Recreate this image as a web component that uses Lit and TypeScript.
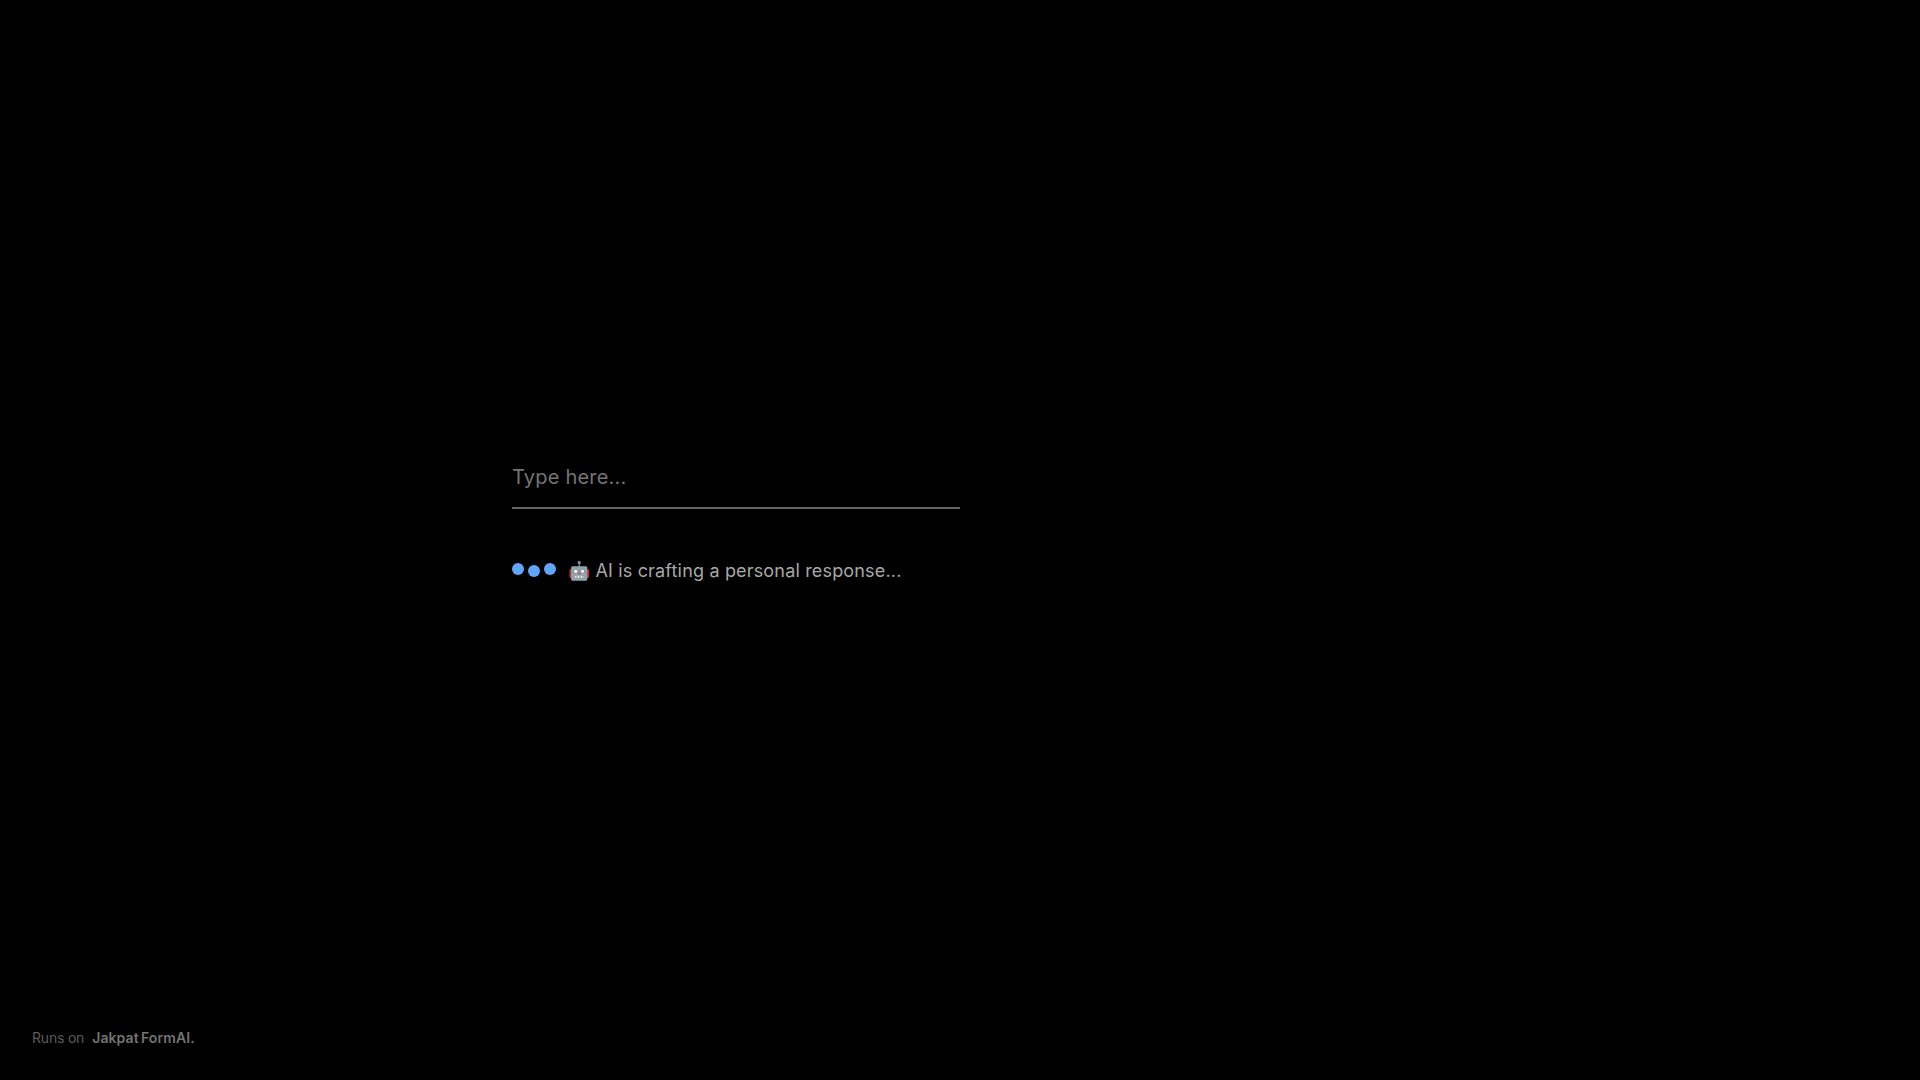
import { LitElement, html, css } from "lit";
import { customElement } from "lit/decorators.js";

@customElement("app-root")
export class AppRoot extends LitElement {
  static styles = css`
    :host {
      display: flex;
      flex-direction: column;
      height: 1080px;
      background: #000;
      font-family: Inter, "Liberation Sans", sans-serif;
      overflow: hidden;
    }
    .main {
      flex: 1;
      display: flex;
      flex-direction: column;
      align-items: flex-start;
      padding: 455px 0 0 512px;
    }
    .field {
      width: 448px;
      height: 54px;
      box-sizing: border-box;
      padding: 0 0 8px;
      display: block;
      background: transparent;
      border: none;
      border-bottom: 2px solid #666;
      outline: none;
      color: #fff;
      font: 400 20px Inter, sans-serif;
      letter-spacing: 0.2px;
    }
    .field::placeholder {
      color: #757575;
      opacity: 1;
    }
    .status {
      margin-top: 46px;
      display: flex;
      align-items: center;
      gap: 12px;
      height: 32px;
    }
    .dots {
      display: flex;
      gap: 4px;
      align-items: center;
    }
    .dot {
      width: 12px;
      height: 12px;
      border-radius: 50%;
      background: #60a5fa;
    }
    .dot.up {
      transform: translateY(-2px);
    }
    .text {
      font-size: 18px;
      line-height: 28px;
      letter-spacing: 0.17px;
      color: #a8a8a8;
      white-space: nowrap;
    }
    .footer {
      padding: 0 0 32px 32px;
      font-size: 14px;
      line-height: 20px;
      color: #5c5c5c;
      display: flex;
      gap: 8px;
    }
    .footer span {
      letter-spacing: -0.2px;
    }
    .footer b {
      font-weight: 600;
      color: #737373;
      letter-spacing: 0.11px;
      word-spacing: -1.5px;
    }
  `;

  render() {
    return html`
      <div class="main">
        <input class="field" placeholder="Type here..." />
        <div class="status">
          <div class="dots">
            <span class="dot up"></span>
            <span class="dot"></span>
            <span class="dot up"></span>
          </div>
          <span class="text">🤖 AI is crafting a personal response...</span>
        </div>
      </div>
      <div class="footer"><span>Runs on</span><b>Jakpat FormAI.</b></div>
    `;
  }
}
